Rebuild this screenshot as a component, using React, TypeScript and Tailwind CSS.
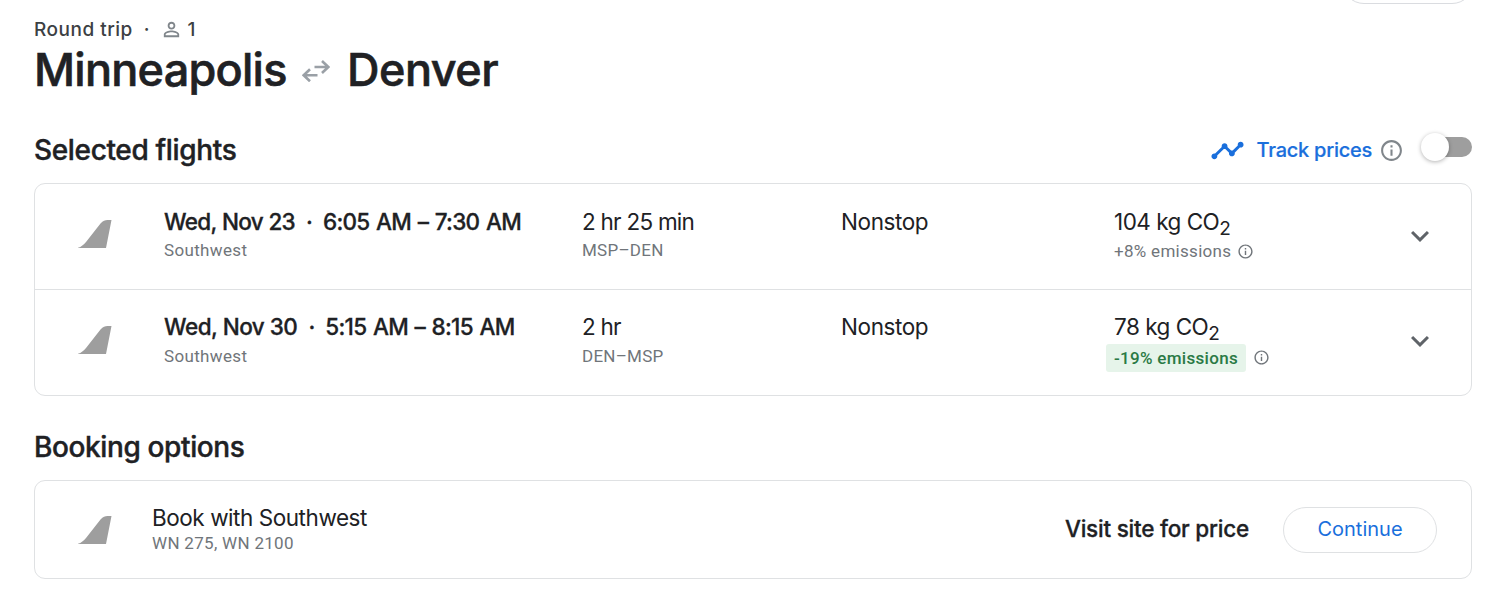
import { MdExpandMore, MdInfoOutline, MdPersonOutline, MdTimeline } from "react-icons/md";

const flights = [
  {
    date: "Wed, Nov 23",
    time: "6:05 AM – 7:30 AM",
    duration: "2 hr 25 min",
    route: "MSP–DEN",
    co2: "104 kg CO",
    emissions: "+8% emissions",
    low: false,
  },
  {
    date: "Wed, Nov 30",
    time: "5:15 AM – 8:15 AM",
    duration: "2 hr",
    route: "DEN–MSP",
    co2: "78 kg CO",
    emissions: "-19% emissions",
    low: true,
  },
];

function Tail() {
  return (
    <svg viewBox="0 0 34 30" className="h-[30px] w-[34px] shrink-0 fill-[#9e9e9e]">
      <path d="M-.5 29C3 28 5.500 26 8 23L22.500 4.500C25 1.500 27 1 29.500 1H33.500L28 29Z" />
    </svg>
  );
}

function SwapArrows() {
  return (
    <svg viewBox="0 0 28 22" className="h-[22px] w-7 fill-none stroke-[#9aa0a6]" strokeWidth="2.6">
      <path d="M12.500 7H26M20 1L26.300 7L20 13M15.500 15.300H2M8 9.300L1.700 15.300L8 21.300" />
    </svg>
  );
}

export default function App() {
  return (
    <main className="flex h-[594px] w-[1500px] flex-col overflow-hidden bg-white pr-[28px] pl-[34px] font-['Inter',sans-serif] text-[#202124]">
      <div className="flex h-[18px] justify-end">
        <div className="-mt-10 -mr-0.5 h-11 w-[132px] rounded-full border border-[#dadce0]" />
      </div>
      <div className="flex h-6 items-center text-[19px] font-medium text-[#3c4043]">
        <span className="tracking-[0.5px]">Round trip</span>
        <span className="ml-[11px]">·</span>
        <MdPersonOutline className="mb-px ml-[10px] size-[23px] text-[#80868b]" />
        <span className="ml-[5px]">1</span>
      </div>
      <h1 className="flex h-14 items-center text-[45px] font-medium [-webkit-text-stroke:0.6px]">
        <span className="w-[252px] tracking-[-0.75px]">Minneapolis</span>
        <span className="mt-0.5 mr-[17px] ml-[16px]"><SwapArrows /></span>
        <span className="tracking-[-0.5px]">Denver</span>
      </h1>
      <div className="mt-[31px] flex h-[42px] items-center justify-between">
        <h2 className="text-[28px] font-medium tracking-[-0.35px] [-webkit-text-stroke:0.4px]">Selected flights</h2>
        <div className="flex items-center">
          <MdTimeline className="size-[35px] text-[#1a6fdc]" />
          <span className="ml-3 text-[20px] font-medium tracking-[-0.25px] text-[#1a6fdc] [-webkit-text-stroke:0.2px]">Track prices</span>
          <MdInfoOutline className="ml-[7px] size-[25px] text-[#80868b]" />
          <div className="mb-1.5 ml-[31px] flex h-5 w-[37px] items-center rounded-full bg-[#9e9e9e]">
            <div className="-ml-3.5 size-7 shrink-0 rounded-full bg-white shadow-[0_1px_4px_rgba(0,0,0,0.3)]" />
          </div>
        </div>
      </div>
      <section className="mt-[12px] h-[213px] divide-y divide-[#dfe1e3] rounded-[11px] border border-[#dfe1e3]">
        {flights.map((f) => (
          <div key={f.date} className={f.low ? "flex h-[105.500px] pt-[22.400px] pl-[43px]" : "flex h-[105.500px] pt-[23.400px] pl-[43px]"}>
            <div className={f.low ? "mt-[13px] w-[86px]" : "mt-[12px] w-[86px]"}><Tail /></div>
            <div className="w-[418px]">
              <div className="flex h-[29px] items-center text-[22.500px] font-medium whitespace-nowrap [-webkit-text-stroke:0.3px]">
                <span className={f.low ? "tracking-[-0.5px]" : "tracking-[-0.65px]"}>{f.date}</span>
                <span className="mr-2.5 ml-[11px]">·</span>
                <span className="tracking-[-0.7px] [word-spacing:1.200px]">{f.time}</span>
              </div>
              <div className={f.low ? "mt-px font-['Roboto',sans-serif] text-[17px] leading-[29px] tracking-[0.35px] text-[#70757a]" : "font-['Roboto',sans-serif] text-[17px] leading-[29px] tracking-[0.35px] text-[#70757a]"}>Southwest</div>
            </div>
            <div className="w-[259px]">
              <div className="text-[22.500px] leading-[29px] tracking-[-0.75px]">{f.duration}</div>
              <div className={f.low ? "mt-px font-['Roboto',sans-serif] text-[17px] leading-[29px] tracking-[0.25px] text-[#70757a]" : "font-['Roboto',sans-serif] text-[17px] leading-[29px] tracking-[0.25px] text-[#70757a]"}>{f.route}</div>
            </div>
            <div className="w-[273px] text-[22.500px] leading-[29px] tracking-[-0.4px]">Nonstop</div>
            <div className="w-[288px]">
              <div className="h-[29px] text-[22.500px] leading-[29px] tracking-[-0.5px]">
                {f.co2}
                <sub className="text-[19px]">2</sub>
              </div>
              <div className={f.low ? "mt-[3px] flex items-center font-['Roboto',sans-serif] text-[17px] tracking-[0.3px] text-[#70757a]" : "mt-px flex items-center font-['Roboto',sans-serif] text-[17px] tracking-[0.3px] text-[#70757a]"}>
                <span className={f.low ? "-ml-2 rounded-[3px] bg-[#e6f4ea] px-2 leading-7 font-medium text-[#2a7a45]" : "leading-7"}>{f.emissions}</span>
                <MdInfoOutline className={f.low ? "ml-[7px] size-[17px]" : "ml-1.5 size-[17px]"} />
              </div>
            </div>
            <MdExpandMore className="mt-[11px] size-9 text-[#5f6368]" />
          </div>
        ))}
      </section>
      <h2 className="mt-[31px] text-[28px] leading-10 font-medium tracking-[-0.38px] [-webkit-text-stroke:0.4px]">Booking options</h2>
      <section className="mt-[13px] flex h-[99px] items-center rounded-[11px] border border-[#dfe1e3] pr-[34px] pl-[43px]">
        <Tail />
        <div className="ml-10 flex-1">
          <div className="text-[22.500px] leading-[27px] tracking-[-0.45px]">Book with Southwest</div>
          <div className="font-['Roboto',sans-serif] text-[17px] leading-6 tracking-[0.3px] text-[#70757a]">WN 275, WN 2100</div>
        </div>
        <span className="pb-px text-[22.500px] font-medium tracking-[-0.22px] [-webkit-text-stroke:0.3px]">Visit site for price</span>
        <button className="ml-[34px] h-[46px] w-[154px] rounded-full border border-[#dfe1e3] pb-0.5 text-[20px] text-[#1a6fdc]">Continue</button>
      </section>
    </main>
  );
}
